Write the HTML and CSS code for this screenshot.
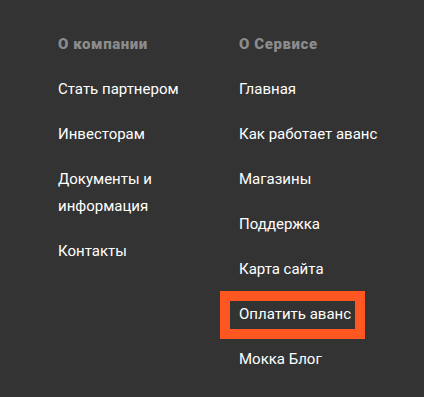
FILE: index.html
```html
<!DOCTYPE html>
<html lang="ru">
<head>
<meta charset="utf-8">
<link rel="stylesheet" href="styles.css">
</head>
<body>
<footer class="footer">
  <nav class="col col-company">
    <h3 class="col-title">О компании</h3>
    <ul class="links">
      <li><a href="#">Стать партнером</a></li>
      <li><a href="#">Инвесторам</a></li>
      <li><a href="#">Документы и<br>информация</a></li>
      <li><a href="#">Контакты</a></li>
    </ul>
  </nav>
  <nav class="col col-service">
    <h3 class="col-title">О Сервисе</h3>
    <ul class="links">
      <li><a href="#">Главная</a></li>
      <li><a href="#">Как работает аванс</a></li>
      <li><a href="#">Магазины</a></li>
      <li><a href="#">Поддержка</a></li>
      <li><a href="#">Карта сайта</a></li>
      <li><a href="#" class="highlight">Оплатить аванс</a></li>
      <li><a href="#">Мокка Блог</a></li>
    </ul>
  </nav>
</footer>
</body>
</html>
```
FILE: styles.css
```css
html, body {
  margin: 0;
  padding: 0;
  background: #333333;
}
body {
  font-family: Roboto, "Liberation Sans", sans-serif;
  color: #ffffff;
  height: 397px;
  overflow: hidden;
}
.footer {
  display: flex;
  padding: 31px 0 0 58px;
}
.col-company {
  width: 181px;
}
.col-title {
  margin: 0 0 18px;
  font-size: 15px;
  line-height: 27px;
  font-weight: 900;
  letter-spacing: 0.6px;
  color: #8c8c8c;
}
.links {
  list-style: none;
  margin: 0;
  padding: 0;
  display: flex;
  flex-direction: column;
  gap: 18px;
}
.links li {
  font-size: 15px;
  line-height: 27px;
}
.links a {
  color: #ffffff;
  text-decoration: none;
}
.highlight {
  position: relative;
  display: inline-block;
}
.highlight::before {
  content: "";
  position: absolute;
  box-sizing: border-box;
  top: -10px;
  left: -19px;
  width: 145px;
  height: 48px;
  border: 10px solid #ff5722;
}
```
